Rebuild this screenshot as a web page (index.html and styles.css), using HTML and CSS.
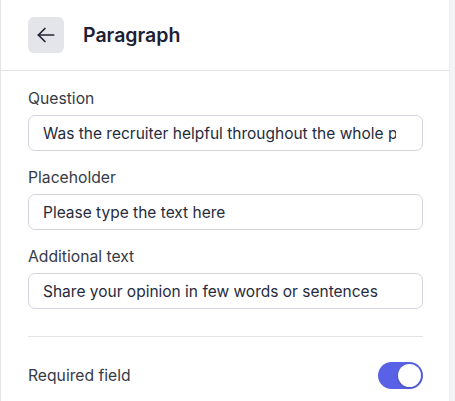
FILE: index.html
```html
<!DOCTYPE html>
<html lang="en">
  <head>
    <meta charset="UTF-8">
    <title>Paragraph</title>
    <link rel="stylesheet" href="styles.css">
  </head>
  <body>
    <aside class="panel">
      <header class="panel-header">
        <button class="back-btn" type="button" aria-label="Back">
          <svg width="26" height="26" viewBox="0 0 24 24" fill="none" stroke="currentColor" stroke-width="1.6" stroke-linecap="round" stroke-linejoin="round">
            <path d="M19 12H5"/>
            <path d="M11 18l-6-6 6-6"/>
          </svg>
        </button>
        <h1 class="panel-title">Paragraph</h1>
      </header>

      <div class="panel-body">
        <label class="field">
          <span class="field-label">Question</span>
          <input class="field-input" type="text" value="Was the recruiter helpful throughout the whole process?">
        </label>
        <label class="field">
          <span class="field-label">Placeholder</span>
          <input class="field-input" type="text" value="Please type the text here">
        </label>
        <label class="field">
          <span class="field-label">Additional text</span>
          <input class="field-input" type="text" value="Share your opinion in few words or sentences">
        </label>

        <hr class="divider">

        <div class="setting-row">
          <span class="setting-label">Required field</span>
          <span class="toggle is-on"><span class="toggle-knob"></span></span>
        </div>
      </div>
    </aside>
  </body>
</html>
```

FILE: styles.css
```css
body {
  margin: 0;
  background: #f3f4f6;
  font-family: Inter, "Noto Sans", Arial, sans-serif;
  color: #1f2433;
}
.panel {
  width: 448px;
  min-height: 401px;
  background: #fff;
  border-left: 1px solid #e3e4e8;
  border-right: 1px solid #ececf0;
}
.panel-header {
  display: flex;
  align-items: center;
  gap: 19px;
  height: 70px;
  padding: 0 27px;
  border-bottom: 1px solid #e3e4e8;
}
.back-btn {
  display: flex;
  align-items: center;
  justify-content: center;
  width: 36px;
  height: 36px;
  padding: 0;
  border: none;
  border-radius: 6px;
  background: #e4e5ea;
  color: #1f2433;
  cursor: pointer;
}
.panel-title {
  margin: 0;
  font-size: 19.5px;
  font-weight: 600;
  color: #1c2135;
}
.panel-body {
  padding: 18px 26px 0 27px;
}
.field {
  display: flex;
  flex-direction: column;
  gap: 6px;
  margin-bottom: 17px;
}
.field-label {
  font-size: 15.7px;
  line-height: 20px;
  color: #353a48;
}
.field-input {
  box-sizing: border-box;
  width: 100%;
  height: 36px;
  padding: 0 26px 0 14px;
  border: 1px solid #d4d5dc;
  border-radius: 7px;
  font-family: inherit;
  font-size: 15.5px;
  color: #262b3d;
  background: #fff;
  outline: none;
}
.divider {
  margin: 27px 0 25px;
  border: none;
  border-top: 1px solid #e3e4e8;
}
.setting-row {
  display: flex;
  align-items: center;
  justify-content: space-between;
}
.setting-label {
  font-size: 15.7px;
  color: #353a48;
}
.toggle {
  display: flex;
  align-items: center;
  width: 45px;
  height: 27px;
  box-sizing: border-box;
  padding: 2px;
  border-radius: 14px;
  background: #d4d5dc;
}
.toggle.is-on {
  justify-content: flex-end;
  background: #5962e6;
}
.toggle-knob {
  width: 23px;
  height: 23px;
  border-radius: 50%;
  background: #fff;
  box-shadow: 0 1px 3px rgba(0, 0, 0, 0.25);
}
```
